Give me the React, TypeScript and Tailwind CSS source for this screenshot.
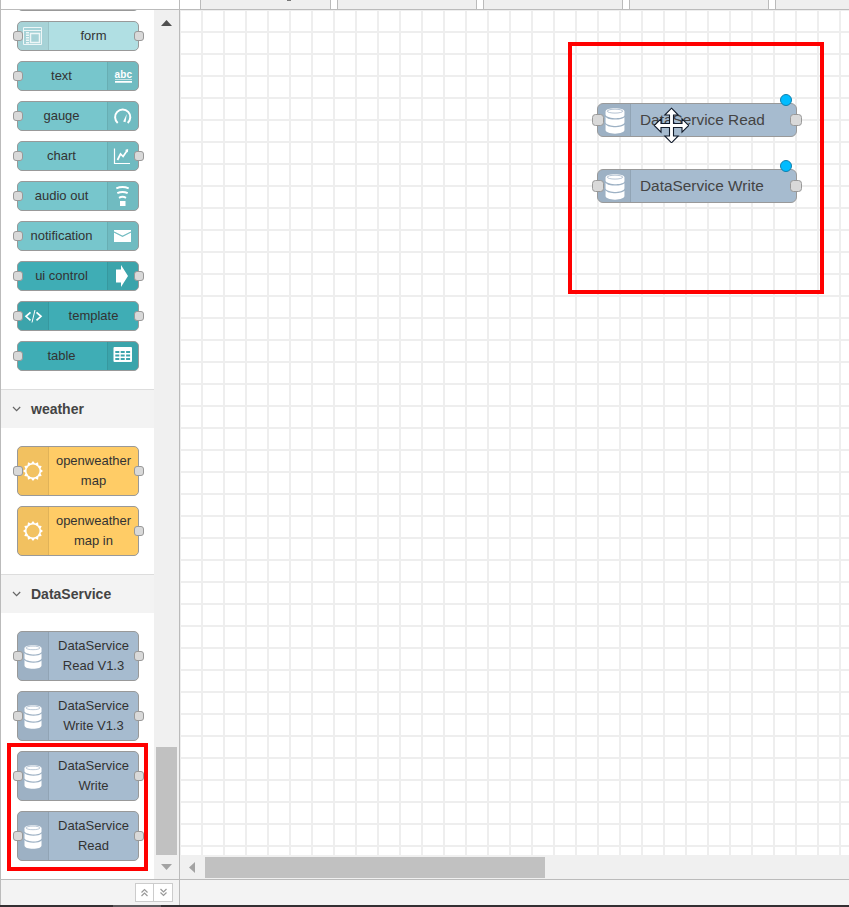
import type { ReactNode } from "react";

const Port = ({ side }: { side: "left" | "right" }) => (
  <span
    className={`absolute top-1/2 -mt-[5px] h-[10px] w-[10px] rounded-[3px] border border-[#999] bg-[#d9d9d9] ${
      side === "left" ? "-left-[5px]" : "-right-[6px]"
    }`}
  />
);

const Database = ({ className }: { className: string }) => (
  <svg viewBox="0 0 18 24" preserveAspectRatio="none" className={className}>
    <g fill="#fff">
      <path d="M9 .3c4.800 0 8.500 1.100 8.500 2.900v3.600c0 1.500-3.600 2.700-7.500 2.700S.6 8.300.5 6.300V3.200C.5 1.400 4.200.3 9 .3z" />
      <path d="M.5 8c1.300 2 4.700 2.700 9 2.700 3.600 0 6.800-.7 8-2.200v4.700c0 1.800-3.600 3.300-7.500 3.300S.6 15.300.5 13.300z" />
      <path d="M.5 15c1.300 2 4.700 2.700 9 2.700 3.600 0 6.800-.7 8-2.200v4.900c0 2-3.700 3.300-8.500 3.300S.5 22.400.5 20.400z" />
    </g>
    <ellipse cx="9" cy="2.900" rx="7" ry="1.800" fill="none" stroke="#9eb1c5" strokeWidth=".7" />
  </svg>
);

const Glyph = ({ children }: { children: ReactNode }) => (
  <svg width="30" height="30" viewBox="0 0 30 30" fill="none" stroke="#fff" className="block shrink-0">
    {children}
  </svg>
);

const sunPoints = Array.from({ length: 24 }, (_, i) => {
  const r = i % 2 === 0 ? 10 : 7.8;
  const a = (i * Math.PI) / 12;
  return `${(15 + r * Math.sin(a)).toFixed(2)},${(15 - r * Math.cos(a)).toFixed(2)}`;
}).join(" ");

const icons: Record<string, ReactNode> = {
  form: (
    <Glyph>
      <g opacity=".8">
        <path d="M5.500 6.500h18v17h-18zM5.500 9.500h18" />
        <path d="M12.500 12.500h9v9h-9z" strokeWidth="1.500" />
        <path d="M9.500 11v12" strokeWidth="3" strokeDasharray="1.500 1" />
      </g>
    </Glyph>
  ),
  text: (
    <Glyph>
      <text x="6.500" y="17" fill="#fff" stroke="none" fontSize="10" fontWeight="bold" textLength="17.500">
        abc
      </text>
      <path d="M7 18.500h17" strokeWidth=".6" />
      <path d="M7 20.900h17" strokeWidth="1.600" />
    </Glyph>
  ),
  gauge: (
    <Glyph>
      <path d="M9.700 21.900A7.600 7.600 0 1 1 19.700 21.900" strokeWidth="2" />
      <path d="M18.800 13l-1.300 8.300-2.300-.8z" fill="#fff" stroke="none" />
    </Glyph>
  ),
  chart: (
    <Glyph>
      <path d="M6.500 7.500v15H22" strokeWidth="1.200" />
      <path d="M9.500 19l3-6 2.600 2.500L19.500 9" strokeWidth="1.700" />
      <path d="M17 9l3.200-1-.4 3.500z" fill="#fff" stroke="none" />
    </Glyph>
  ),
  audio: (
    <Glyph>
      <path d="M8.300 7.300q6.200-2.600 12.400 0M9.300 12.200q5.200-2.600 10.400 0M11 16.800q3.500-2 7 0" strokeWidth="2" />
      <path d="M12 20h5.500v5H12z" fill="#fff" stroke="none" />
    </Glyph>
  ),
  mail: (
    <Glyph>
      <path d="M6 9h17v12H6z" fill="#fff" stroke="none" />
      <path d="M6 11l8.500 4.300 8.500-4.300" stroke="#71bbc1" strokeWidth="1.200" />
    </Glyph>
  ),
  arrow: (
    <Glyph>
      <path d="M8 8.500h5V4l7 11-7 11v-4.500H8z" fill="#fff" stroke="none" />
    </Glyph>
  ),
  code: (
    <Glyph>
      <path d="M12.500 11.300l-4.500 4 4.500 4M18.500 11.300l4.500 4-4.500 4" strokeWidth="1.700" />
      <path d="M17 9l-3 12.500" strokeWidth="1" />
    </Glyph>
  ),
  table: (
    <Glyph>
      <rect x="5.500" y="6" width="18.500" height="15" rx="1" fill="#fff" stroke="none" />
      <path
        d="M7.300 10.900h4M12.700 10.900h4M18.100 10.900h4M7.300 14.500h4M12.700 14.500h4M18.100 14.500h4M7.300 18.100h4M12.700 18.100h4M18.100 18.100h4"
        stroke="#3ca4ac"
        strokeWidth="2"
      />
    </Glyph>
  ),
  sun: (
    <Glyph>
      <polygon points={sunPoints} fill="#fff" stroke="none" />
      <circle cx="15" cy="15" r="6.500" fill="#f2c261" stroke="none" />
    </Glyph>
  ),
  db: <Database className="mt-px h-[24px] w-[18px]" />,
};

type NodeProps = {
  label: string;
  icon: string;
  tone: string;
  iconSide?: "left" | "right";
  ports?: string;
  tall?: boolean;
};

const PaletteNode = ({ label, icon, tone, iconSide = "left", ports = "lr", tall }: NodeProps) => (
  <div
    className={`relative flex w-[122px] shrink-0 items-stretch rounded-[5px] border border-[#999] ${tone} ${
      tall ? "h-[50px]" : "h-[30px]"
    } ${iconSide === "right" ? "flex-row-reverse" : ""}`}
  >
    <div
      className={`flex w-[31px] shrink-0 items-center justify-center overflow-hidden bg-black/5 ${
        iconSide === "left" ? "rounded-l-[4px] border-r border-black/8" : "rounded-r-[4px] border-l border-black/8"
      }`}
    >
      {icons[icon]}
    </div>
    <div
      className={`flex flex-1 items-center justify-center whitespace-pre text-center text-[13px] leading-[20px] text-[#333] ${
        iconSide === "right" ? "pr-[2px]" : ""
      }`}
    >
      {label}
    </div>
    {ports.includes("l") && <Port side="left" />}
    {ports.includes("r") && <Port side="right" />}
  </div>
);

const Group = ({ title }: { title: string }) => (
  <div className="flex h-[39px] shrink-0 items-center border-t border-[#ddd] bg-[#f3f3f3] pl-[11px] text-[14px] font-bold text-[#444]">
    <svg width="10" height="8" viewBox="0 0 10 8" fill="none" stroke="#666" strokeWidth="1.200">
      <path d="M1 2l3.600 3.700 3.600-3.700" />
    </svg>
    <span className="ml-[9px]">{title}</span>
  </div>
);

const CanvasNode = ({ label, place }: { label: string; place: string }) => (
  <div className={`absolute left-[417px] flex h-[34px] w-[200px] rounded-[6px] border border-[#999] bg-[#a6bbcf] ${place}`}>
    <div className="flex w-[33px] items-center justify-center rounded-l-[5px] border-r border-black/8 bg-black/5 pl-px pt-px">
      <Database className="h-[26px] w-[20px]" />
    </div>
    <span className="ml-[9px] text-[15.4px] leading-[32px] text-[#444]">{label}</span>
    <span className="absolute -left-[6px] top-[10px] h-[12px] w-[12px] rounded-[3.500px] border border-[#999] bg-[#d9d9d9]" />
    <span className="absolute -right-[6px] top-[10px] h-[12px] w-[12px] rounded-[3.500px] border border-[#999] bg-[#d9d9d9]" />
    <span className="absolute -top-[10px] left-[182px] h-[12px] w-[12px] rounded-full border border-[#117fac] bg-[#00bcff]" />
  </div>
);

const pale = "bg-[#b0dfe3]";
const mid = "bg-[#77c6cc]";
const teal = "bg-[#3fadb5]";
const amber = "bg-[#ffcc66]";
const blue = "bg-[#a6bbcf]";

const FooterButton = ({ up }: { up?: boolean }) => (
  <span className={`flex h-[19px] items-center justify-center border border-[#ccc] bg-white ${up ? "w-[19px]" : "-ml-px w-[20px]"}`}>
    <svg width="9" height="9" viewBox="0 0 9 9" fill="none" stroke="#999" strokeWidth="1.200">
      {up ? <path d="M1.500 4.500l3-3 3 3M1.500 8l3-3 3 3" /> : <path d="M1.500 1l3 3 3-3M1.500 4.500l3 3 3-3" />}
    </svg>
  </span>
);

export default function App() {
  return (
    <div className="relative flex h-[907px] w-[849px] flex-col overflow-hidden bg-white font-['Liberation_Sans',Arial,sans-serif]">
      <div className="flex h-[905px] shrink-0">
        <aside className="flex w-[180px] shrink-0 flex-col border-x border-[#bbb]">
          <div className="h-[10px] shrink-0 border-b border-[#bbb]" />
          <div className="flex h-[869px] shrink-0">
            <div className="flex w-[153px] flex-col overflow-hidden">
              <div className="-mt-[29px] flex flex-col gap-[10px] pb-[18px] pl-[16px]">
                <PaletteNode label="" icon="form" tone={pale} ports="" />
                <PaletteNode label="form" icon="form" tone={pale} />
                <PaletteNode label="text" icon="text" tone={mid} iconSide="right" ports="l" />
                <PaletteNode label="gauge" icon="gauge" tone={mid} iconSide="right" ports="l" />
                <PaletteNode label="chart" icon="chart" tone={mid} iconSide="right" />
                <PaletteNode label="audio out" icon="audio" tone={mid} iconSide="right" ports="l" />
                <PaletteNode label="notification" icon="mail" tone={mid} iconSide="right" ports="l" />
                <PaletteNode label="ui control" icon="arrow" tone={teal} iconSide="right" />
                <PaletteNode label="template" icon="code" tone={teal} />
                <PaletteNode label="table" icon="table" tone={teal} iconSide="right" ports="l" />
              </div>
              <Group title="weather" />
              <div className="flex flex-col gap-[10px] py-[18px] pl-[16px]">
                <PaletteNode label={"openweather\nmap"} icon="sun" tone={amber} tall />
                <PaletteNode label={"openweather\nmap in"} icon="sun" tone={amber} ports="r" tall />
              </div>
              <Group title="DataService" />
              <div className="flex flex-col gap-[10px] pl-[16px] pt-[18px]">
                <PaletteNode label={"DataService\nRead V1.3"} icon="db" tone={blue} tall />
                <PaletteNode label={"DataService\nWrite V1.3"} icon="db" tone={blue} tall />
                <PaletteNode label={"DataService\nWrite"} icon="db" tone={blue} tall />
                <PaletteNode label={"DataService\nRead"} icon="db" tone={blue} tall />
              </div>
            </div>
            <div className="flex w-[25px] flex-col items-center bg-[#f0f0f0]">
              <svg width="25" height="24" className="shrink-0">
                <path d="M7 16l5.500-6 5.500 6z" fill="#505050" />
              </svg>
              <div className="mt-[713px] h-[108px] w-[21px] shrink-0 bg-[#c1c1c1]" />
              <svg width="25" height="24" className="shrink-0">
                <path d="M7 9h11l-5.500 6z" fill="#a3a3a3" />
              </svg>
            </div>
          </div>
          <div className="flex h-[26px] shrink-0 justify-end border-t border-[#bbb] bg-[#f3f3f3] pr-[6px] pt-[3px]">
            <FooterButton up />
            <FooterButton />
          </div>
        </aside>

        <main className="flex w-[669px] flex-col">
          <div className="flex h-[10px] shrink-0 gap-[6px] overflow-hidden border-b border-[#bbb] pl-[20px]">
            <div className="flex w-[131px] shrink-0 border-x border-[#bbb] bg-[#efefef] pl-[86px]">
              <span className="h-px w-[4px] bg-[#777]" />
            </div>
            <div className="w-[140px] shrink-0 border-x border-[#bbb] bg-[#efefef]" />
            <div className="w-[140px] shrink-0 border-x border-[#bbb] bg-[#efefef]" />
            <div className="w-[140px] shrink-0 border-x border-[#bbb] bg-[#efefef]" />
            <div className="w-[140px] shrink-0 border-x border-[#bbb] bg-[#efefef]" />
          </div>
          <div className="relative h-[845px] shrink-0 bg-[linear-gradient(to_right,#eee_2px,transparent_2px),linear-gradient(to_bottom,#eee_2px,transparent_2px)] bg-[size:22px_22px] bg-[position:-1px_-1px]">
            <CanvasNode label="DataService Read" place="top-[93px]" />
            <CanvasNode label="DataService Write" place="top-[159px]" />
            <div className="absolute left-[388px] top-[32px] h-[252px] w-[256px] border-4 border-[#ff0000]" />
            <svg width="36" height="36" viewBox="-18 -18 36 36" className="absolute left-[473px] top-[97px]">
              <path
                d="M.5-16.800L7.200-10H2.500V-1.500H11V-6.200L17.800.5L11 7.200V2.500H2.500V11H7.200L.5 17.800L-6.200 11H-1.500V2.500H-10V7.200L-16.800.5L-10-6.200V-1.500H-1.500V-10H-6.200Z"
                fill="#fff"
                stroke="#111b2b"
                strokeWidth="1.100"
              />
            </svg>
          </div>
          <div className="flex h-[24px] shrink-0 bg-[#f0f0f0]">
            <svg width="25" height="24" className="shrink-0">
              <path d="M15 7v11l-6-5.500z" fill="#a3a3a3" />
            </svg>
            <div className="mt-[2px] h-[21px] w-[340px] bg-[#c1c1c1]" />
          </div>
          <div className="h-[26px] shrink-0 border-t border-[#bbb] bg-[#f3f3f3]" />
        </main>
      </div>
      <div className="flex h-[2px] bg-[#332f32] pl-[113px]">
        <span className="w-[48px] bg-[#5c595c]" />
      </div>
      <div className="absolute left-[7px] top-[743px] h-[128px] w-[141px] border-4 border-[#ff0000]" />
    </div>
  );
}
